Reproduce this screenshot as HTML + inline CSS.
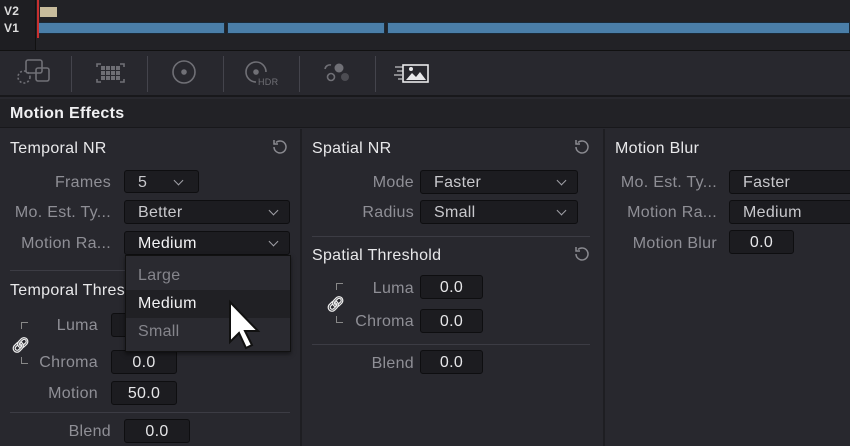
<!DOCTYPE html>
<html><head><meta charset="utf-8"><style>
*{margin:0;padding:0;box-sizing:border-box}
body{width:850px;height:446px;overflow:hidden;background:#28282e;font-family:"Liberation Sans",sans-serif;position:relative;color:#9a9aa0;font-size:16px;letter-spacing:.3px}
.a{position:absolute}
.t{color:#e8e8ea;font-size:16px;position:absolute;margin-top:1px}
.l{position:absolute;text-align:right;color:#8f8f96;font-size:16px;line-height:24px}
.f{position:absolute;background:#1c1c20;border:1px solid #0e0e10;border-radius:3px;color:#c8c8cc;font-size:16px;line-height:23px;padding-left:13px}
.fv{color:#e6e6e8;text-align:center;padding-left:0}
.ch{position:absolute;right:12px;top:6px;width:7px;height:7px;border-right:1.5px solid #a0a0a6;border-bottom:1.5px solid #a0a0a6;transform:rotate(45deg)}
.hr{position:absolute;height:1px;background:#3c3c44}
.vs{position:absolute;width:1px;background:#44444c}
</style></head><body>
<!-- timeline -->
<div class="a" style="left:0;top:0;width:850px;height:50px;background:#222226"></div>
<div class="a" style="left:0;top:0;width:36px;height:50px;background:#1e1e22;border-right:1px solid #111"></div>
<div class="a" style="left:4px;top:4px;font-size:12px;font-weight:bold;color:#ddd">V2</div>
<div class="a" style="left:4px;top:21px;font-size:12px;font-weight:bold;color:#ddd">V1</div>
<div class="a" style="left:40px;top:7px;width:17px;height:10px;background:#c8bc9c"></div>
<div class="a" style="left:38px;top:22px;width:187px;height:12px;background:#4a7ea8;border:1px solid #1a2a38"></div>
<div class="a" style="left:227px;top:22px;width:158px;height:12px;background:#4a7ea8;border:1px solid #1a2a38"></div>
<div class="a" style="left:387px;top:22px;width:463px;height:12px;background:#4a7ea8;border:1px solid #1a2a38"></div>
<div class="a" style="left:37px;top:0;width:2px;height:38px;background:#c83030"></div>
<div class="a" style="left:0;top:50px;width:850px;height:1px;background:#111"></div>
<!-- toolbar -->
<div class="a" style="left:0;top:51px;width:850px;height:46px;background:#28282e;border-bottom:2px solid #18181b"></div>
<div class="vs" style="left:71px;top:56px;height:36px"></div>
<div class="vs" style="left:147px;top:56px;height:36px"></div>
<div class="vs" style="left:223px;top:56px;height:36px"></div>
<div class="vs" style="left:299px;top:56px;height:36px"></div>
<div class="vs" style="left:375px;top:56px;height:36px"></div>
<svg class="a" style="left:0;top:51px" width="450" height="46" fill="none" stroke="#707076" stroke-width="1.6">
<rect x="26" y="9" width="16" height="13" rx="2"/><rect x="36" y="17" width="13" height="13" rx="2"/><circle cx="24" cy="26" r="6" stroke-dasharray="2 2"/>
<g fill="#6e6e74" stroke="none"><rect x="101" y="15" width="4" height="4"/><rect x="106" y="15" width="4" height="4"/><rect x="111" y="15" width="4" height="4"/><rect x="116" y="15" width="4" height="4"/><rect x="101" y="20" width="4" height="4"/><rect x="106" y="20" width="4" height="4"/><rect x="111" y="20" width="4" height="4"/><rect x="116" y="20" width="4" height="4"/><rect x="101" y="25" width="4" height="4"/><rect x="106" y="25" width="4" height="4"/><rect x="111" y="25" width="4" height="4"/><rect x="116" y="25" width="4" height="4"/></g>
<path d="M97 16v-3h4M120 13h4v3M97 28v3h4M124 28v3h-4"/>
<circle cx="184" cy="21" r="11"/><circle cx="184" cy="21" r="2" fill="#707076"/>
<path d="M266 21a10 10 0 1 0-10 10"/><circle cx="256" cy="21" r="2" fill="#707076"/>
<text x="258" y="34" font-size="9" fill="#707076" stroke="none" font-family="Liberation Sans">HDR</text>
<circle cx="339" cy="17" r="4.5" fill="#707076" stroke="none"/><circle cx="331" cy="26" r="3.5"/><circle cx="345" cy="26" r="4" fill="#4c4c52" stroke="none"/><path d="M325 18a5 5 0 0 1 6-4"/>
<rect x="403" y="14" width="25" height="17" stroke="#e8e8ea"/><path d="M406 29l6-7 4 4 4-5 6 8z" fill="#e8e8ea" stroke="none"/><circle cx="411" cy="18" r="2" fill="#e8e8ea" stroke="none"/>
<path d="M395 16h8M397 20h6M394 24h8M398 28h4" stroke="#e8e8ea" stroke-width="1"/>
</svg>
<!-- header -->
<div class="a" style="left:0;top:99px;width:850px;height:29px;background:#222226;border-bottom:1px solid #18181b"></div>
<div class="a" style="left:10px;top:105px;font-size:16px;font-weight:bold;color:#f0f0f2">Motion Effects</div>
<div class="a" style="left:300px;top:129px;width:2px;height:317px;background:#1e1e22"></div>
<div class="a" style="left:603px;top:129px;width:2px;height:317px;background:#1e1e22"></div>
<!-- col1 -->
<div class="t" style="left:10px;top:139px">Temporal NR</div>
<svg class="a" style="left:270px;top:137px" width="20" height="20" fill="none" stroke="#8a8a90" stroke-width="1.5"><path d="M4 10a6 6 0 1 0 2-4.5"/><path d="M4 3v4h4"/></svg>
<div class="l" style="left:0;width:111px;top:171px">Frames</div>
<div class="f" style="left:124px;top:170px;width:75px;height:23px">5<span class="ch" style="right:16px"></span></div>
<div class="l" style="left:0;width:111px;top:201px">Mo. Est. Ty...</div>
<div class="f" style="left:124px;top:200px;width:166px;height:24px">Better<span class="ch"></span></div>
<div class="l" style="left:0;width:111px;top:232px">Motion Ra...</div>
<div class="f" style="left:124px;top:231px;width:166px;height:24px;color:#f4f4f6">Medium<span class="ch"></span></div>
<div class="hr" style="left:10px;top:270px;width:280px"></div>
<div class="t" style="left:10px;top:281px">Temporal Threshold</div>
<div class="a" style="left:21px;top:322px;width:7px;height:7px;border-left:1px solid #888;border-top:1px solid #888"></div>
<div class="a" style="left:21px;top:357px;width:7px;height:7px;border-left:1px solid #888;border-bottom:1px solid #888"></div>
<div class="a" style="left:11px;top:336px;font-size:15px;color:#eee;font-weight:bold">&#x1F517;&#xFE0E;</div>
<div class="l" style="left:0;width:98px;top:314px">Luma</div>
<div class="f fv" style="left:111px;top:313px;width:66px;height:24px">0.0</div>
<div class="l" style="left:0;width:98px;top:351px">Chroma</div>
<div class="f fv" style="left:111px;top:350px;width:66px;height:24px">0.0</div>
<div class="l" style="left:0;width:98px;top:382px">Motion</div>
<div class="f fv" style="left:111px;top:381px;width:66px;height:24px">50.0</div>
<div class="hr" style="left:10px;top:412px;width:280px"></div>
<div class="l" style="left:0;width:111px;top:420px">Blend</div>
<div class="f fv" style="left:124px;top:419px;width:66px;height:24px">0.0</div>
<!-- dropdown list -->
<div class="a" style="left:125px;top:255px;width:166px;height:97px;background:#2a2a30;border:1px solid #111;box-shadow:0 2px 4px rgba(0,0,0,.5)">
<div style="position:absolute;left:12px;top:11px;color:#85858c">Large</div>
<div style="position:absolute;left:0;top:34px;width:164px;height:28px;background:#202024"></div>
<div style="position:absolute;left:12px;top:39px;color:#f2f2f4">Medium</div>
<div style="position:absolute;left:12px;top:67px;color:#85858c">Small</div>
</div>
<svg class="a" style="left:226px;top:298px" width="40" height="56"><path d="M4 4v40l9-9 7 15 6-3-7-14h13z" fill="#fff" stroke="#111" stroke-width="2"/></svg>
<!-- col2 -->
<div class="t" style="left:312px;top:139px">Spatial NR</div>
<svg class="a" style="left:572px;top:137px" width="20" height="20" fill="none" stroke="#8a8a90" stroke-width="1.5"><path d="M4 10a6 6 0 1 0 2-4.5"/><path d="M4 3v4h4"/></svg>
<div class="l" style="left:303px;width:111px;top:171px">Mode</div>
<div class="f" style="left:420px;top:170px;width:158px;height:24px">Faster<span class="ch"></span></div>
<div class="l" style="left:303px;width:111px;top:201px">Radius</div>
<div class="f" style="left:420px;top:200px;width:158px;height:24px">Small<span class="ch"></span></div>
<div class="hr" style="left:312px;top:236px;width:278px"></div>
<div class="t" style="left:312px;top:246px">Spatial Threshold</div>
<svg class="a" style="left:572px;top:244px" width="20" height="20" fill="none" stroke="#8a8a90" stroke-width="1.5"><path d="M4 10a6 6 0 1 0 2-4.5"/><path d="M4 3v4h4"/></svg>
<div class="a" style="left:336px;top:283px;width:7px;height:7px;border-left:1px solid #888;border-top:1px solid #888"></div>
<div class="a" style="left:336px;top:316px;width:7px;height:7px;border-left:1px solid #888;border-bottom:1px solid #888"></div>
<div class="a" style="left:326px;top:295px;font-size:15px;color:#eee;font-weight:bold">&#x1F517;&#xFE0E;</div>
<div class="l" style="left:303px;width:111px;top:277px">Luma</div>
<div class="f fv" style="left:420px;top:275px;width:63px;height:24px">0.0</div>
<div class="l" style="left:303px;width:111px;top:310px">Chroma</div>
<div class="f fv" style="left:420px;top:309px;width:63px;height:24px">0.0</div>
<div class="hr" style="left:312px;top:344px;width:278px"></div>
<div class="l" style="left:303px;width:111px;top:352px">Blend</div>
<div class="f fv" style="left:420px;top:350px;width:63px;height:24px">0.0</div>
<!-- col3 -->
<div class="t" style="left:615px;top:139px">Motion Blur</div>
<div class="l" style="left:605px;width:112px;top:171px">Mo. Est. Ty...</div>
<div class="f" style="left:729px;top:170px;width:130px;height:24px">Faster</div>
<div class="l" style="left:605px;width:112px;top:201px">Motion Ra...</div>
<div class="f" style="left:729px;top:200px;width:130px;height:24px">Medium</div>
<div class="l" style="left:605px;width:112px;top:232px">Motion Blur</div>
<div class="f fv" style="left:729px;top:230px;width:65px;height:24px">0.0</div>
</body></html>
